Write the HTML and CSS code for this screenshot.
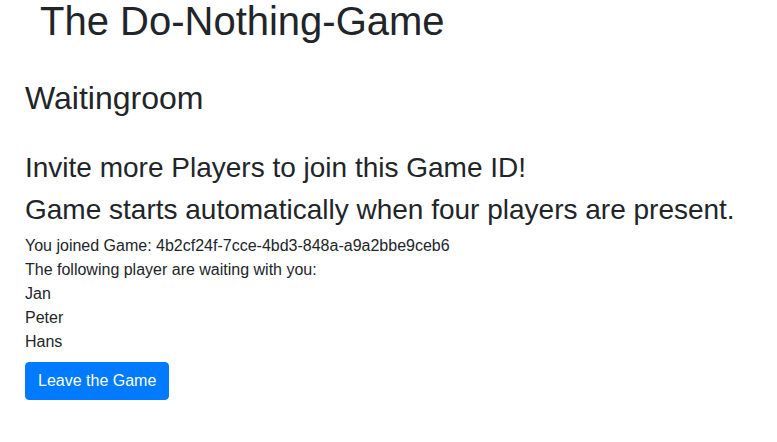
FILE: index.html
```html
<!DOCTYPE html>
<html lang="en">
<head>
<meta charset="utf-8">
<title>The Do-Nothing-Game</title>
<link rel="stylesheet" href="styles.css">
</head>
<body>
<div class="page">
  <h1 class="title">The Do-Nothing-Game</h1>
  <h2 class="room">Waitingroom</h2>
  <h3 class="info">Invite more Players to join this Game ID!</h3>
  <h3 class="info">Game starts automatically when four players are present.</h3>
  <div class="line">You joined Game: 4b2cf24f-7cce-4bd3-848a-a9a2bbe9ceb6</div>
  <div class="line">The following player are waiting with you:</div>
  <div class="players">
    <div class="line">Jan</div>
    <div class="line">Peter</div>
    <div class="line">Hans</div>
  </div>
  <button class="btn" type="button">Leave the Game</button>
</div>
</body>
</html>
```
FILE: styles.css
```css
html, body {
  margin: 0;
  padding: 0;
  background: #fff;
}
body {
  font-family: "Liberation Sans", Arial, sans-serif;
  font-size: 16px;
  line-height: 24px;
  color: #212529;
}
.page {
  padding: 0 25px;
  display: flex;
  flex-direction: column;
  align-items: flex-start;
}
.title {
  font-size: 40px;
  font-weight: 400;
  line-height: 43px;
  margin: 0 0 36px 15px;
}
.room {
  font-size: 32px;
  font-weight: 400;
  line-height: 38.4px;
  margin: 0 0 33.5px 0;
}
.info {
  font-size: 28px;
  font-weight: 400;
  line-height: 33.6px;
  margin: 0 0 8px 0;
}
.line {
  font-size: 16px;
  line-height: 24px;
}
.players {
  display: flex;
  flex-direction: column;
}
.btn {
  margin-top: 8px;
  font-family: "Liberation Sans", Arial, sans-serif;
  font-size: 16px;
  line-height: 24px;
  padding: 6px 12px;
  border: 1px solid #007bff;
  border-radius: 4px;
  background: #007bff;
  color: #fff;
  cursor: pointer;
}
```
